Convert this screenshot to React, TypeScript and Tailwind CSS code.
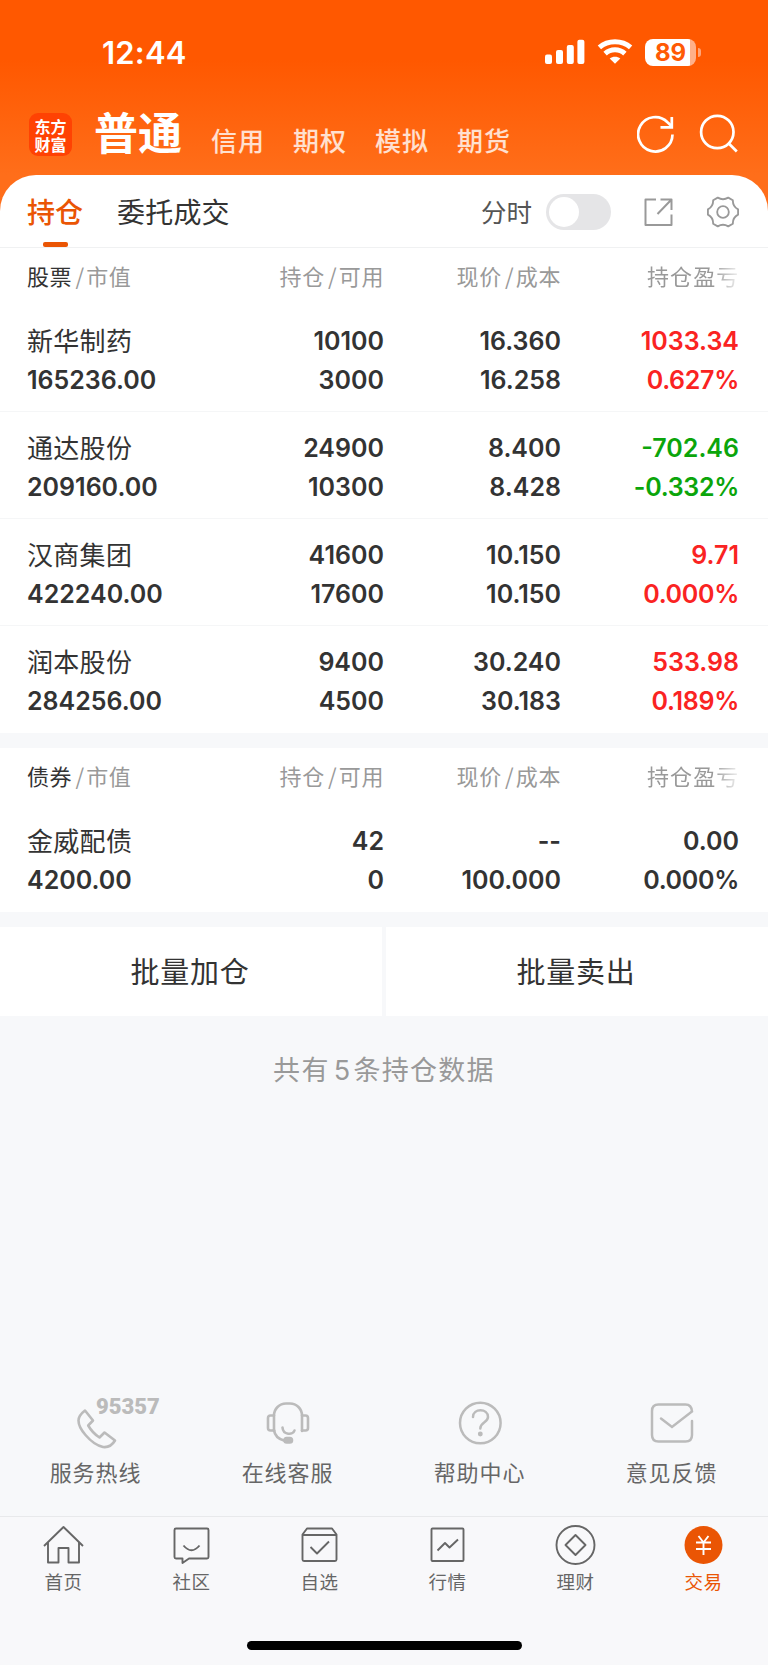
import type { ReactNode } from "react";

type Holding = {
    name: string;
    value: string;
    amount: string;
    usable: string;
    price: string;
    cost: string;
    profit: string;
    rate: string;
    color: string;
}

const RED = "text-[#fa2322]"
const GREEN = "text-[#0ba50b]"
const DARK = "text-[#333333]"

const stocks: Holding[] = [
    { name: "新华制药", value: "165236.00", amount: "10100", usable: "3000", price: "16.360", cost: "16.258", profit: "1033.34", rate: "0.627%", color: RED },
    { name: "通达股份", value: "209160.00", amount: "24900", usable: "10300", price: "8.400", cost: "8.428", profit: "-702.46", rate: "-0.332%", color: GREEN },
    { name: "汉商集团", value: "422240.00", amount: "41600", usable: "17600", price: "10.150", cost: "10.150", profit: "9.71", rate: "0.000%", color: RED },
    { name: "润本股份", value: "284256.00", amount: "9400", usable: "4500", price: "30.240", cost: "30.183", profit: "533.98", rate: "0.189%", color: RED },
];

const bonds: Holding[] = [
    { name: "金威配债", value: "4200.00", amount: "42", usable: "0", price: "--", cost: "100.000", profit: "0.00", rate: "0.000%", color: DARK },
];

function StatusBar() {
    return (
        <div className="flex h-[100px] items-start justify-between pl-[102px] pr-[67px] pt-[32px]">
            <span className="pt-[1px] font-['Inter'] text-[31px] font-semibold leading-[40px] tracking-[0.2px] text-white">12:44</span>
            <div className="flex h-[40px] items-center">
                <svg width="40" height="26" viewBox="0 0 40 26" fill="#fff">
                    <rect x="0" y="15.5" width="7" height="9.5" rx="2" />
                    <rect x="11" y="11" width="7" height="14" rx="2" />
                    <rect x="21.8" y="6" width="7" height="19" rx="2" />
                    <rect x="32.4" y="0.7" width="7" height="24.3" rx="2" />
                </svg>
                <svg className="ml-[12px]" width="36" height="26" viewBox="0 0 36 26" fill="none" stroke="#fff" strokeWidth="5">
                    <path d="M2.4 8.4C11 .8 25 .8 33.6 8.4" />
                    <path d="M8.1 14.6c5.6-5.2 14.2-5.2 19.8 0" />
                    <path d="M18 24.8l-5.3-5.2c3-2.6 7.6-2.6 10.6 0z" fill="#fff" stroke="none" />
                </svg>
                <div className="ml-[12px] flex items-center">
                    <div className="flex h-[27px] w-[51px] items-center justify-center rounded-[8px] bg-[linear-gradient(90deg,#fff_45px,#ffb08a_45px)]">
                        <span className="font-['Inter'] text-[24px] font-bold leading-[27px] text-[#ff5a05]">89</span>
                    </div>
                    <div className="ml-[2px] h-[9px] w-[3px] rounded-r-[3px] bg-[#ffa57a]" />
                </div>
            </div>
        </div>
    );
}

function TopNav() {
    const links = ["信用", "期权", "模拟", "期货"];
    return (
        <div className="flex h-[75px] items-start pl-[29px] pr-[29px]">
            <div className="mt-[13px] flex h-[43px] w-[43px] items-center justify-center rounded-[9px] bg-[#ff4203]">
                <p className="w-[32px] break-all text-[16px] font-bold leading-[18px] text-white">东方财富</p>
            </div>
            <h1 className="ml-[22px] mt-[1px] text-[44px] font-bold leading-[60px] text-white">普通</h1>
            <div className="ml-[29px] mt-[20px] flex gap-[28px]">
                {links.map((item) => (
                    <span key={item} className="text-[26px] font-medium leading-[40px] tracking-[1px] text-white/80">{item}</span>
                ))}
            </div>
            <svg className="ml-auto mt-[14px]" width="40" height="40" viewBox="0 0 40 40" fill="none" stroke="#fff" strokeWidth="2.700">
                <path d="M35.5 20.500A17.200 17.200 0 1 1 30.500 8.200L35 12.500" />
                <path d="M34.800 3v10.300H23.500" />
            </svg>
            <svg className="ml-[22px] mt-[14px]" width="40" height="40" viewBox="0 0 40 40" fill="none" stroke="#fff" strokeWidth="2.700">
                <circle cx="18.300" cy="18" r="16.200" />
                <path d="M29.300 29l8.500 8.500" />
            </svg>
        </div>
    );
}

function Tabs() {
    return (
        <div className="flex h-[73px] items-center border-b border-[#f0f1f2] pl-[27px] pr-[29px]">
            <div className="flex h-[72px] flex-col items-center justify-between">
                <span className="pt-[16px] text-[28px] font-medium leading-[40px] text-[#ea5504]">持仓</span>
                <span className="h-[5px] w-[25px] rounded-[2px] bg-[#ea5504]" />
            </div>
            <span className="ml-[34px] text-[28px] leading-[40px] tracking-[0.2px] text-[#333333]">委托成交</span>
            <span className="ml-auto text-[25.500px] leading-[40px] text-[#555555]">分时</span>
            <div className="ml-[14px] mt-[1px] flex h-[36px] w-[65px] items-center rounded-full bg-[#e5e5e7] pl-[3px]">
                <div className="h-[30px] w-[30px] rounded-full bg-white" />
            </div>
            <svg className="ml-[32px] mt-[1px]" width="30" height="30" viewBox="0 0 30 30" fill="none" stroke="#999" strokeWidth="2" strokeLinejoin="round">
                <path d="M13 2.500H2.500V28H28.500V17.500" />
                <path d="M17.500 2.500H28.500V13M28.500 2.500L14.500 17" />
            </svg>
            <svg className="ml-[34px] mt-[1px]" width="32" height="32" viewBox="-.5 -.5 33 33" fill="none" stroke="#999" strokeWidth="1.900" strokeLinejoin="round">
                <path d="M31.560 18.740Q25.960 21.750 26.160 28.100L21.400 30.850Q16 27.500 10.600 30.850L5.840 28.100Q6.040 21.750.440 18.740V13.260Q6.040 10.250 5.840 3.900L10.600 1.150Q16 4.500 21.400 1.150L26.160 3.900Q25.960 10.250 31.560 13.260Z" />
                <circle cx="16" cy="16" r="6" />
            </svg>
        </div>
    );
}

function Slash() {
    return <span className="ml-[3px] mr-[2px] inline-block w-[9px] text-center tracking-normal">/</span>
}

function HoldingTable({ title, items }: { title: string; items: Holding[] }) {
    return (
        <section className="bg-white">
            <div className="grid h-[57px] grid-cols-[200px_157px_177px_178px] pl-[27px] pt-[7px] text-right text-[22px] leading-[40px] tracking-[0.6px] text-[#999999]">
                <div className="text-left"><span className="text-[#333333]">{title}</span><Slash />市值</div>
                <div>持仓<Slash />可用</div>
                <div>现价<Slash />成本</div>
                <div className="ml-[86px] overflow-hidden whitespace-nowrap text-left tracking-[1.100px] [mask-image:linear-gradient(90deg,#000_66px,transparent_96px)]">持仓盈亏</div>
            </div>
            {items.map((item) => (
                <div
                    key={item.name}
                    className="grid h-[107px] grid-cols-[200px_157px_177px_178px] grid-rows-[39px_39px] border-b border-[#f5f6f7] pl-[27px] pt-[17px] text-right font-['Inter','Noto_Sans_CJK_SC',sans-serif] text-[25px] font-semibold leading-[39px] text-[#333333] last:border-b-0"
                >
                    <div className="text-left text-[26px] font-normal tracking-[0.3px]">{item.name}</div>
                    <div>{item.amount}</div>
                    <div>{item.price}</div>
                    <div className={item.color}>{item.profit}</div>
                    <div className="text-left">{item.value}</div>
                    <div>{item.usable}</div>
                    <div>{item.cost}</div>
                    <div className={`tracking-[-0.300px] ${item.color}`}>{item.rate}</div>
                </div>
            ))}
        </section>
    );
}

function ServiceItem({ label, children }: { label: string; children: ReactNode }) {
    return (
        <div className="flex flex-1 flex-col items-center">
            <div className="relative h-[46px] w-[46px]">{children}</div>
            <span className="mt-[5px] pr-[1px] text-[22px] leading-[40px] tracking-[0.900px] text-[#666666]">{label}</span>
        </div>
    );
}

function Services() {
    const svg = "h-[46px] w-[46px] overflow-visible"
    return (
        <div className="flex h-[116px] text-[#bbbbbb]">
            <ServiceItem label="服务热线">
                <svg className={svg} viewBox="0 0 46 46" fill="none" stroke="currentColor" strokeWidth="2.600" strokeLinejoin="round">
                    <path d="M12 10.500L20 20.500L15.200 25.500Q19.500 33 26.500 37.500L31.500 32.500L42 40.500Q37.500 48 30 47Q21 45 12.500 35Q5.500 27 5.500 20.500Q5.500 15.500 12 10.500Z" />
                </svg>
                <span className="absolute left-[23px] top-[-5px] font-['Roboto'] text-[22px] font-black leading-[24px]">95357</span>
            </ServiceItem>
            <ServiceItem label="在线客服">
                <svg className={svg} viewBox="0 0 46 46" fill="none" stroke="currentColor" strokeWidth="2.600" strokeLinecap="round">
                    <path d="M9 31V15.500A12 12 0 0 1 21 3.500H25A12 12 0 0 1 37 15.500V31" />
                    <path d="M9 15.500H5.500Q3 15.500 3 18V28Q3 30.500 5.500 30.500H9M37 15.500H40.500Q43 15.500 43 18V28Q43 30.500 40.500 30.500H37" />
                    <path d="M9 30Q10 38 19 40.500" />
                    <path d="M17.500 27.500C18 35 28 35.500 29.500 30.500" />
                    <rect x="19.500" y="38" width="7.500" height="4.500" rx="2.200" fill="currentColor" />
                </svg>
            </ServiceItem>
            <ServiceItem label="帮助中心">
                <svg className={svg} viewBox="0 0 46 46" fill="none" stroke="currentColor" strokeWidth="2.500" strokeLinecap="round">
                    <circle cx="23.300" cy="23" r="20.300" />
                    <path d="M16 17C16 8 31 8 31 17C31 22.500 23.300 22 23.300 28.500" />
                    <circle cx="23.300" cy="34" r="1.200" fill="currentColor" />
                </svg>
            </ServiceItem>
            <ServiceItem label="意见反馈">
                <svg className={svg} viewBox="0 0 46 46" fill="none" stroke="currentColor" strokeWidth="2.500" strokeLinecap="round">
                    <path d="M43 21V35Q43 41.500 36.500 41.500H9.500Q3 41.500 3 35V11Q3 4.500 9.500 4.500H36.500Q42.500 4.500 43 11.500L23 27L12 18.500" />
                </svg>
            </ServiceItem>
        </div>
    );
}

const menu = [
    {
        label: "首页",
        icon: <path d="M1 21L20.500 2L40 21M5 17.500V37.500H15.500V23H25.500V37.500H36V17.500" />,
    },
    {
        label: "社区",
        icon: <path d="M5 3.500H36Q37.500 3.500 37.500 5V32Q37.500 33.500 36 33.500H18L11.500 38V33.500H5Q3.500 33.500 3.500 32V5Q3.500 3.500 5 3.500ZM12.500 20.500Q20.500 30 28.500 20.500" />,
    },
    {
        label: "自选",
        icon: <path d="M8 3.500H33L37.500 9.500V34.500Q37.500 36 36 36H5Q3.500 36 3.500 34.500V9.500ZM3.500 10H37.500M11.500 22L18 28.500L30 16.500" />,
    },
    {
        label: "行情",
        icon: <path d="M5.500 3.500H35.500Q36.500 3.500 36.500 4.500V35Q36.500 36 35.500 36H5.500Q4.500 36 4.500 35V4.500Q4.500 3.500 5.500 3.500ZM10.500 25.500L18 18L22.500 22.500L31 14.500" />,
    },
    {
        label: "理财",
        icon: <><circle cx="20.500" cy="20" r="19" /><path d="M20.500 10L30.500 20L20.500 30L10.500 20Z" /></>,
    },
    {
        label: "交易",
        active: true,
        icon: <><circle cx="20.500" cy="20" r="19" fill="#ea5504" stroke="none" /><path d="M15.500 11L20.500 17.500L25.500 11M20.500 17.500V30M13 17.500H28M13 24H28" stroke="#fff" /></>,
    },
];

function BottomMenu() {
    return (
        <nav className="flex h-[149px] flex-col items-center border-t border-[#e8e9eb] bg-[#f8f8fa]">
            <div className="flex w-full pt-[8px]">
                {menu.map((item) => (
                    <div key={item.label} className="flex flex-1 flex-col items-center pr-[1px]">
                        <svg width="41" height="40" viewBox="0 0 41 40" fill="none" stroke="#666" strokeWidth="1.900" strokeLinejoin="round">
                            {item.icon}
                        </svg>
                        <span className={`mt-[1px] text-[18.500px] leading-[30px] tracking-[0.500px] ${item.active ? "text-[#ea5504]" : "text-[#666666]"}`}>{item.label}</span>
                    </div>
                ))}
            </div>
            <div className="mt-[45px] h-[9px] w-[275px] rounded-full bg-black" />
        </nav>
    );
}

export default function App() {
    return (
        <div className="flex h-[1665px] w-[768px] flex-col overflow-hidden bg-[#f7f8fa] font-['Noto_Sans_CJK_SC',sans-serif]">
            <div className="bg-[linear-gradient(180deg,#ff5800_60px,#ff6e1a_175px)]">
                <StatusBar />
                <TopNav />
                <div className="rounded-t-[36px] bg-white">
                    <Tabs />
                </div>
            </div>
            <HoldingTable title="股票" items={stocks} />
            <div className="mt-[15px]">
                <HoldingTable title="债券" items={bonds} />
            </div>
            <div className="mt-[15px] flex h-[89px] gap-[4px] text-[29px] tracking-[0.8px] text-[#333333]">
                <button className="flex-1 bg-white pb-[2px] pr-[2px]">批量加仓</button>
                <button className="flex-1 bg-white pb-[2px] pr-[2px]">批量卖出</button>
            </div>
            <p className="mt-[33px] text-center text-[27px] leading-[40px] tracking-[1.3px] text-[#999999]">
                共有<span className="ml-[4px] mr-[2px] font-['Inter']">5</span>条持仓数据
            </p>
            <div className="mt-auto">
                <Services />
                <BottomMenu />
            </div>
        </div>
    );
}
